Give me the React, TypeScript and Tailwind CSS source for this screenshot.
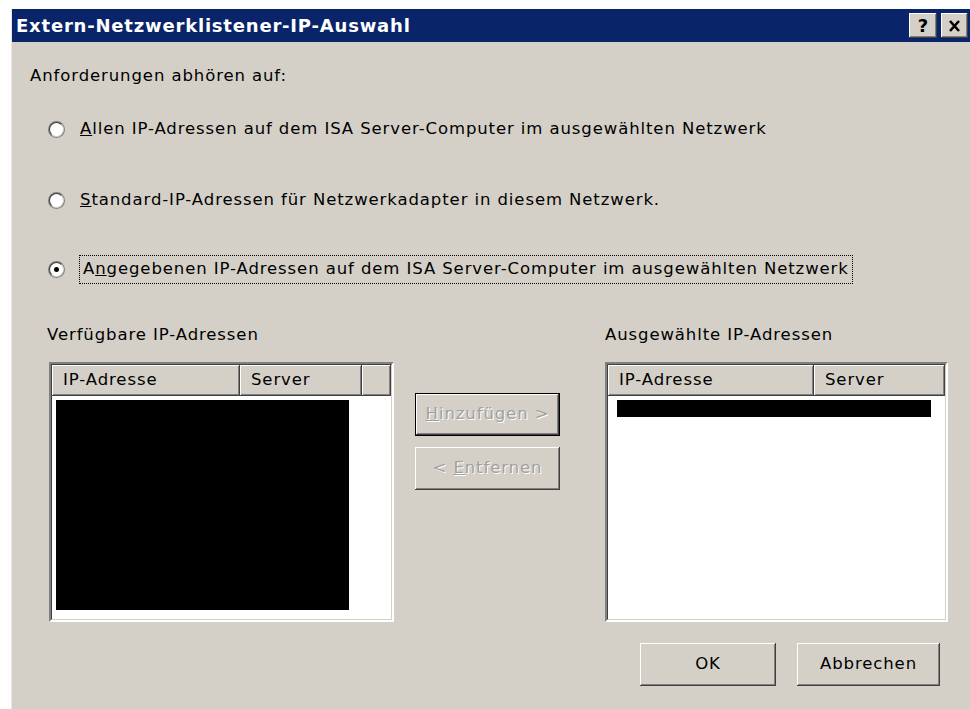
import React from 'react';

const font = { fontFamily: '"DejaVu Sans", Tahoma, sans-serif' };

const Radio: React.FC<{ checked?: boolean }> = ({ checked }) => (
  <div className="w-[17px] h-[17px] rounded-full bg-[#808080] p-px">
    <div className="w-full h-full rounded-full bg-white border border-t-[#404040] border-l-[#404040] border-b-[#d4d0c8] border-r-[#d4d0c8] flex items-center justify-center">
      {checked && <div className="w-[5px] h-[5px] rounded-full bg-black" />}
    </div>
  </div>
);

const HeaderCell: React.FC<{ w: string; children?: React.ReactNode }> = ({ w, children }) => (
  <div
    className={`${w} h-full flex items-center pl-[11px] bg-[#d4d0c8] shadow-[inset_-1px_-1px_#404040,inset_1px_1px_#ffffff,inset_-2px_-2px_#808080]`}
  >
    {children}
  </div>
);

const ListBox: React.FC<{ cols: [string, string]; extra?: boolean; children?: React.ReactNode }> = ({
  cols,
  extra,
  children,
}) => (
  <div className="h-[260px] border-2 border-t-[#808080] border-l-[#808080] border-b-white border-r-white">
    <div className="h-full flex flex-col bg-white border border-t-[#404040] border-l-[#404040] border-b-[#d4d0c8] border-r-[#d4d0c8]">
      <div className="h-[31px] flex shrink-0">
        <HeaderCell w={cols[0]}>IP-Adresse</HeaderCell>
        <HeaderCell w={cols[1]}>Server</HeaderCell>
        {extra && <HeaderCell w="flex-1" />}
      </div>
      <div className="flex-1 pt-[4px]">{children}</div>
    </div>
  </div>
);

const Button: React.FC<{ label: React.ReactNode; w: string; disabled?: boolean; def?: boolean }> = ({
  label,
  w,
  disabled,
  def,
}) => (
  <div className={`${w} h-[43px] ${def ? 'border border-black' : ''}`}>
    <div
      className={`h-full flex items-center justify-center bg-[#d4d0c8] shadow-[inset_-1px_-1px_#404040,inset_1px_1px_#ffffff,inset_-2px_-2px_#808080] ${
        disabled ? 'text-[#a0a0a0] [text-shadow:1px_1px_#ffffff]' : 'text-black'
      }`}
    >
      {label}
    </div>
  </div>
);

export default function App() {
  return (
    <div className="w-[970px] h-[709px] bg-white pt-[9px] pl-[11px] overflow-hidden" style={font}>
      <div className="h-full flex flex-col bg-[#d4d0c8] border-l border-[#e8e6e2]">
        {/* title bar */}
        <div className="h-[33px] shrink-0 bg-[#0a246a] flex items-center pl-[4px] pr-[2px]">
          <span className="text-white font-bold text-[18px] tracking-[0.8px]">Extern-Netzwerklistener-IP-Auswahl</span>
          <div className="ml-auto flex gap-[4px]">
            <div className="w-[28px] h-[25px] bg-[#d4d0c8] flex items-center justify-center font-bold text-[18px] text-black shadow-[inset_-1px_-1px_#404040,inset_1px_1px_#ffffff,inset_-2px_-2px_#808080]">
              ?
            </div>
            <div className="w-[27px] h-[25px] bg-[#d4d0c8] flex items-center justify-center shadow-[inset_-1px_-1px_#404040,inset_1px_1px_#ffffff,inset_-2px_-2px_#808080]">
              <svg width="13" height="12" viewBox="0 0 13 12">
                <path d="M2 1l9 10M11 1L2 11" stroke="black" strokeWidth="2.6" />
              </svg>
            </div>
          </div>
        </div>

        {/* body */}
        <div className="flex-1 flex flex-col text-[16.5px] text-black tracking-[0.9px] pr-[22px]">
          <div className="h-[20px] mt-[24px] ml-[18px] leading-[20px]">Anforderungen abhören auf:</div>

          <div className="h-[30px] mt-[28px] ml-[36px] flex items-center gap-[15px]">
            <Radio />
            <span>
              <u>A</u>llen IP-Adressen auf dem ISA Server-Computer im ausgewählten Netzwerk
            </span>
          </div>
          <div className="h-[30px] mt-[41px] ml-[36px] flex items-center gap-[15px]">
            <Radio />
            <span>
              <u>S</u>tandard-IP-Adressen für Netzwerkadapter in diesem Netzwerk.
            </span>
          </div>
          <div className="h-[30px] mt-[39px] ml-[36px] flex items-center gap-[14px]">
            <Radio checked />
            <span className="h-[29px] flex items-center px-[3px] border border-dotted border-black">
              A<u>n</u>gegebenen IP-Adressen auf dem ISA Server-Computer im ausgewählten Netzwerk
            </span>
          </div>

          <div className="mt-[41px] ml-[37px] flex">
            <div className="w-[346px] flex flex-col">
              <div className="h-[20px] leading-[20px] -ml-[2px]">Verfügbare IP-Adressen</div>
              <div className="mt-[17px]">
                <ListBox cols={['w-[188px]', 'w-[122px]']} extra>
                  <div className="ml-[4px] w-[293px] h-[210px] bg-black" />
                </ListBox>
              </div>
            </div>

            <div className="ml-[21px] w-[145px] flex flex-col gap-[11px] pt-[68px]">
              <Button
                w="w-[145px]"
                def
                disabled
                label={
                  <span>
                    <u>H</u>inzufügen &gt;
                  </span>
                }
              />
              <Button
                w="w-[145px]"
                disabled
                label={
                  <span>
                    &lt; <u>E</u>ntfernen
                  </span>
                }
              />
            </div>

            <div className="ml-[45px] flex-1 flex flex-col">
              <div className="h-[20px] leading-[20px]">Ausgewählte IP-Adressen</div>
              <div className="mt-[17px]">
                <ListBox cols={['w-[206px]', 'w-[131px]']}>
                  <div className="ml-[9px] w-[314px] h-[17px] bg-black" />
                </ListBox>
              </div>
            </div>
          </div>

          <div className="mt-[21px] flex justify-end gap-[21px] pr-[8px]">
            <Button w="w-[136px]" label="OK" />
            <Button w="w-[143px]" label="Abbrechen" />
          </div>
        </div>
      </div>
    </div>
  );
}
